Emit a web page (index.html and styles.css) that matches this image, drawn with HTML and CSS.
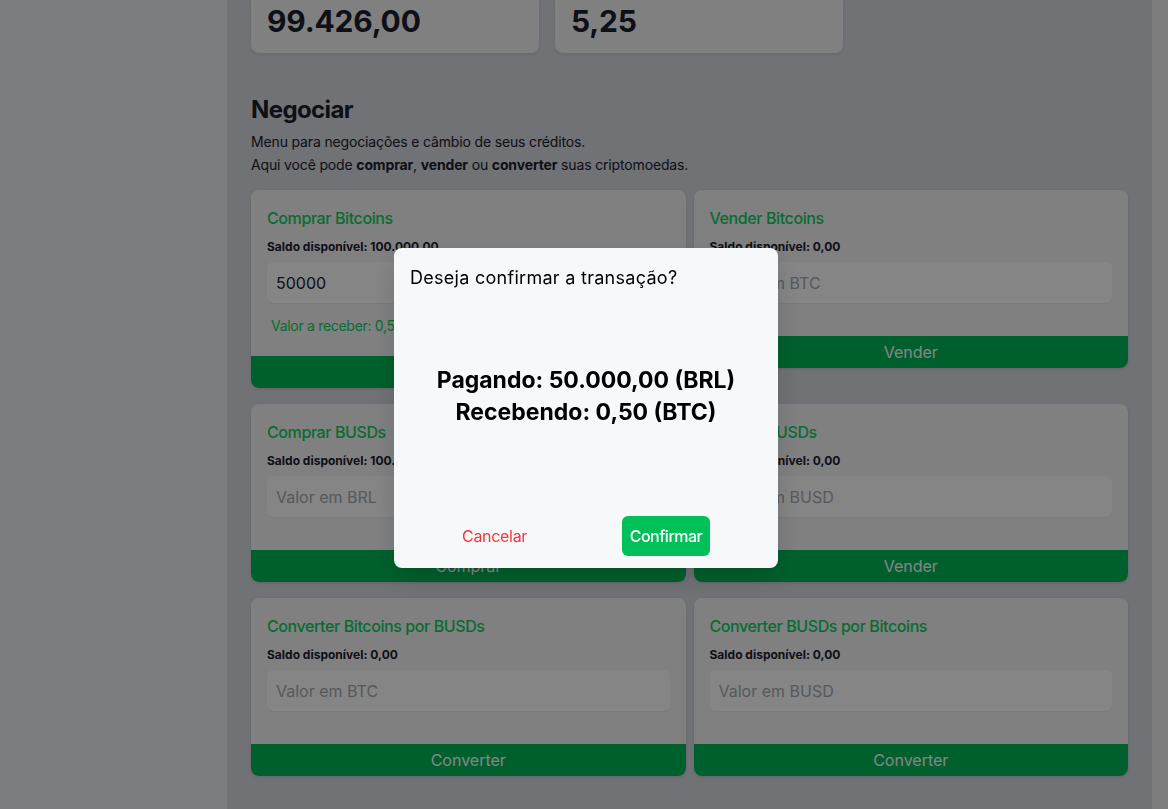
FILE: index.html
```html
<!DOCTYPE html>
<html lang="pt-BR">
<head>
<meta charset="utf-8">
<title>Negociar</title>
<link rel="stylesheet" href="styles.css">
</head>
<body>
<div class="app">
  <aside class="sidebar"></aside>
  <main class="main">
    <div class="stats">
      <div class="stat"><span class="stat-value">99.426,00</span></div>
      <div class="stat"><span class="stat-value">5,25</span></div>
    </div>
    <section class="trade">
      <h2 class="trade-title">Negociar</h2>
      <p class="trade-text">Menu para negociações e câmbio de seus créditos.</p>
      <p class="trade-text">Aqui você pode <b>comprar</b>, <b>vender</b> ou <b>converter</b> suas criptomoedas.</p>
      <div class="grid">
        <div class="card">
          <div class="card-body">
            <h3 class="card-title">Comprar Bitcoins</h3>
            <p class="balance">Saldo disponível: 100.000,00</p>
            <div class="input filled">50000</div>
            <p class="receive">Valor a receber: 0,50 BTC</p>
          </div>
          <div class="card-btn">Comprar</div>
        </div>
        <div class="card">
          <div class="card-body">
            <h3 class="card-title">Vender Bitcoins</h3>
            <p class="balance">Saldo disponível: 0,00</p>
            <div class="input">Valor em BTC</div>
          </div>
          <div class="card-btn">Vender</div>
        </div>
        <div class="card">
          <div class="card-body">
            <h3 class="card-title">Comprar BUSDs</h3>
            <p class="balance">Saldo disponível: 100.000,00</p>
            <div class="input">Valor em BRL</div>
          </div>
          <div class="card-btn">Comprar</div>
        </div>
        <div class="card">
          <div class="card-body">
            <h3 class="card-title">Vender BUSDs</h3>
            <p class="balance">Saldo disponível: 0,00</p>
            <div class="input">Valor em BUSD</div>
          </div>
          <div class="card-btn">Vender</div>
        </div>
        <div class="card">
          <div class="card-body">
            <h3 class="card-title">Converter Bitcoins por BUSDs</h3>
            <p class="balance">Saldo disponível: 0,00</p>
            <div class="input">Valor em BTC</div>
          </div>
          <div class="card-btn">Converter</div>
        </div>
        <div class="card">
          <div class="card-body">
            <h3 class="card-title">Converter BUSDs por Bitcoins</h3>
            <p class="balance">Saldo disponível: 0,00</p>
            <div class="input">Valor em BUSD</div>
          </div>
          <div class="card-btn">Converter</div>
        </div>
      </div>
    </section>
  </main>
  <div class="gutter"></div>
</div>

<div class="overlay"></div>
<div class="modal" role="dialog">
  <div class="modal-header">Deseja confirmar a transação?</div>
  <div class="modal-body">
    <p>Pagando: 50.000,00 (BRL)</p>
    <p>Recebendo: 0,50 (BTC)</p>
  </div>
  <div class="modal-footer">
    <button class="btn-cancel">Cancelar</button>
    <button class="btn-confirm">Confirmar</button>
  </div>
</div>
</body>
</html>
```

FILE: styles.css
```css
* { box-sizing: border-box; }

html, body {
  margin: 0;
  padding: 0;
  height: 100%;
  overflow: hidden;
}

body {
  font-family: Inter, "Liberation Sans", Arial, sans-serif;
  color: #1a202c;
  background: #d6dae2;
}

.app {
  display: flex;
  height: 809px;
}

.sidebar {
  width: 227px;
  flex: none;
  background: #eef0f4;
}

.main {
  flex: 1;
  background: #d6dae2;
  padding: 0 24px;
}

.gutter {
  width: 16px;
  flex: none;
  background: #f0f0f0;
}

/* stats */
.stats {
  display: flex;
  gap: 16px;
  margin-bottom: 41px;
}

.stat {
  width: 288px;
  height: 53px;
  background: #f5f6f8;
  border-radius: 0 0 8px 8px;
  box-shadow: 0 1px 3px rgba(0,0,0,0.10);
  padding: 3px 16px 0;
}

.stat-value {
  display: block;
  font-size: 30px;
  line-height: 36px;
  font-weight: 700;
  letter-spacing: -0.2px;
}

/* trade */
.trade-title {
  margin: 0;
  font-size: 24px;
  line-height: 32px;
  font-weight: 700;
  letter-spacing: -0.6px;
}

.trade-text {
  margin: 0;
  font-size: 14px;
  line-height: 23px;
  letter-spacing: -0.15px;
}
.trade-title + .trade-text { margin-top: 4px; }

.trade-text b { font-weight: 700; }

.grid {
  margin-top: 14px;
  display: grid;
  grid-template-columns: 1fr 1fr;
  column-gap: 8px;
  row-gap: 16px;
  align-items: start;
}

.card {
  background: #f5f6f8;
  border-radius: 8px;
  overflow: hidden;
  box-shadow: 0 1px 3px rgba(0,0,0,0.12);
}

.card-body {
  padding: 16px 16px 20px;
}

.card-title {
  margin: 0 0 8px;
  font-size: 16px;
  line-height: 24px;
  font-weight: 500;
  letter-spacing: -0.4px;
  color: #0dd05c;
}

.balance {
  margin: 0 0 6px;
  font-size: 12px;
  line-height: 18px;
  font-weight: 700;
}

.input {
  height: 41px;
  border-radius: 6px;
  background: #ffffff;
  box-shadow: 0 1px 2px rgba(0,0,0,0.06);
  padding: 0 9px;
  display: flex;
  align-items: center;
  font-size: 16px;
  color: #a6aab2;
  margin-bottom: 13px;
}

.input.filled { color: #1a202c; }

.receive {
  margin: 0;
  padding-left: 4px;
  font-size: 14px;
  line-height: 20px;
  letter-spacing: -0.3px;
  color: #0dd05c;
}

.card-btn {
  height: 32px;
  background: #00b856;
  color: #ffffff;
  font-size: 16px;
  display: flex;
  align-items: center;
  justify-content: center;
}

/* overlay + modal */
.overlay {
  position: fixed;
  inset: 0;
  background: rgba(0,0,0,0.48);
}

.modal {
  position: fixed;
  top: 248px;
  left: 394px;
  width: 384px;
  height: 320px;
  background: #f7f8fa;
  border-radius: 8px;
  box-shadow: 0 10px 25px rgba(0,0,0,0.15);
  display: flex;
  flex-direction: column;
}

.modal-header {
  padding: 16px 16px 0;
  font-size: 18px;
  line-height: 28px;
  letter-spacing: 0.28px;
  color: #000;
}

.modal-body {
  margin-top: 72px;
  text-align: center;
  color: #000;
}

.modal-body p {
  margin: 0;
  font-size: 23px;
  line-height: 32px;
  font-weight: 700;
}

.modal-footer {
  margin-top: auto;
  padding: 0 68px 12px 52px;
  display: flex;
  justify-content: space-between;
  align-items: center;
}

.btn-cancel {
  height: 40px;
  padding: 0 16px;
  border: 0;
  background: transparent;
  color: #f0383f;
  font-family: inherit;
  font-size: 16px;
  letter-spacing: -0.3px;
}

.btn-confirm {
  height: 40px;
  width: 88px;
  padding: 0;
  border: 0;
  border-radius: 6px;
  background: #00c05a;
  color: #ffffff;
  font-family: inherit;
  font-size: 16px;
  font-weight: 500;
  letter-spacing: -0.5px;
}
```
